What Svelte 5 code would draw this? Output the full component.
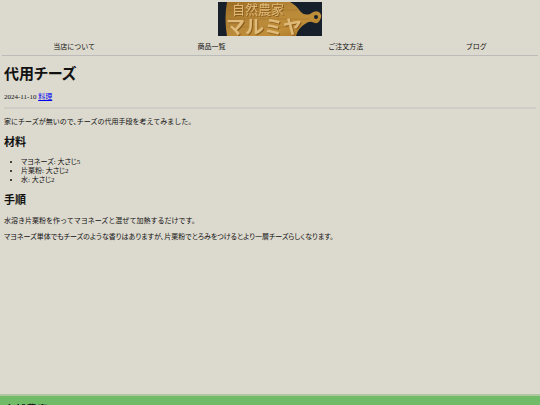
<script lang="ts">
    const links = [
        { href: "/about", label: "当店について" },
        { href: "/items", label: "商品一覧" },
        { href: "/order", label: "ご注文方法" },
        { href: "/blog", label: "ブログ" },
    ];

    const ingredients = ["マヨネーズ: 大さじ5", "片栗粉: 大さじ2", "水: 大さじ2"];
</script>

<div class="page">
    <header>
        <a class="logo" href="/" aria-label="自然農家マルミヤ">
            <svg viewBox="0 0 104 34">
                <defs>
                    <linearGradient id="wood" x1="0" y1="0" x2="1" y2="1">
                        <stop offset="0" stop-color="#9c6e24" />
                        <stop offset="0.45" stop-color="#b9893a" />
                        <stop offset="0.7" stop-color="#c08e38" />
                        <stop offset="1" stop-color="#a36c20" />
                    </linearGradient>
                </defs>
                <rect width="104" height="34" fill="#17202a" />
                <path
                    d="M9 0 Q6 16 9 34 H78 Q80 26 87 22 Q91 19 94 20 Q100 23 102 18 Q105 13 101 10 Q97 8 92 12 Q86 14 82 9 Q78 3 72 0 Z"
                    fill="url(#wood)"
                />
                <path
                    d="M9 8 H80 M8 17 H92 M8 25 H82"
                    stroke="#8f5e1c"
                    stroke-width="1"
                    opacity="0.3"
                />
                <circle cx="98" cy="15" r="2" fill="#17202a" />
                <text class="small" x="14" y="12">自然農家</text>
                <text class="large" x="8" y="32">マルミヤ</text>
            </svg>
        </a>
        <nav>
            {#each links as { href, label }}
                <a {href}>{label}</a>
            {/each}
        </nav>
    </header>

    <main>
        <h1>代用チーズ</h1>
        <div class="meta">
            <time datetime="2024-11-10">2024-11-10</time>
            <a href="/blog/cooking">料理</a>
        </div>
        <hr />
        <p>家にチーズが無いので、チーズの代用手段を考えてみました。</p>
        <h2>材料</h2>
        <ul>
            {#each ingredients as item}
                <li>{item}</li>
            {/each}
        </ul>
        <h2>手順</h2>
        <p>水溶き片栗粉を作ってマヨネーズと混ぜて加熱するだけです。</p>
        <p class="proportional">
            マヨネーズ単体でもチーズのような香りはありますが、片栗粉でとろみをつけるとより一層チーズらしくなります。
        </p>
    </main>

    <footer>
        <h2>自然農家</h2>
    </footer>
</div>

<style>
    :global(body) {
        background: #dcd9ce;
    }

    .page {
        display: flex;
        flex-direction: column;
        height: 100vh;
        overflow: hidden;
        color: #111;
        font-family: "Liberation Serif", "Noto Sans CJK JP", serif;
        font-size: 7px;
        line-height: 9px;
    }

    header {
        margin: 0 2px;
        padding-top: 2px;
        border-bottom: 1px solid #bbb;
    }

    .logo {
        display: block;
        width: 104px;
        margin: 0 auto;
    }

    svg {
        display: block;
        width: 100%;
    }

    svg text {
        fill: #e0ba78;
        font-family: "Liberation Sans", "Noto Sans CJK JP", sans-serif;
        filter: drop-shadow(1px 1px 0 #8a5c1c);
    }

    .small {
        font-size: 13px;
    }

    .large {
        font-size: 19px;
        font-weight: bold;
    }

    nav {
        display: flex;
        justify-content: space-around;
        padding: 7px 0 3px;
    }

    nav a {
        color: inherit;
        text-decoration: none;
    }

    main {
        flex: 1;
        padding: 0 4px;
    }

    h1,
    h2,
    ul,
    p.proportional {
        font-feature-settings: "palt";
    }

    h1 {
        margin: 8px 0;
        font-size: 15px;
        line-height: 20px;
    }

    h2 {
        margin: 8px 0;
        font-size: 11px;
        line-height: 15px;
    }

    .meta {
        padding-top: 1px;
    }

    hr {
        margin: 5px 0 9px;
        border: 0;
        border-top: 2px solid #cfcdc6;
    }

    p {
        margin: 7px 0;
        font-feature-settings: "halt";
    }

    ul {
        margin: 8px 0;
        padding-left: 17px;
    }

    main h2 + p {
        margin-top: 9px;
    }

    footer {
        height: 9px;
        padding: 0 4px;
        overflow: hidden;
        border-top: 2px solid #b0c6a0;
        background: #70bb67;
    }

    footer h2 {
        margin: 7px 0;
    }
</style>
